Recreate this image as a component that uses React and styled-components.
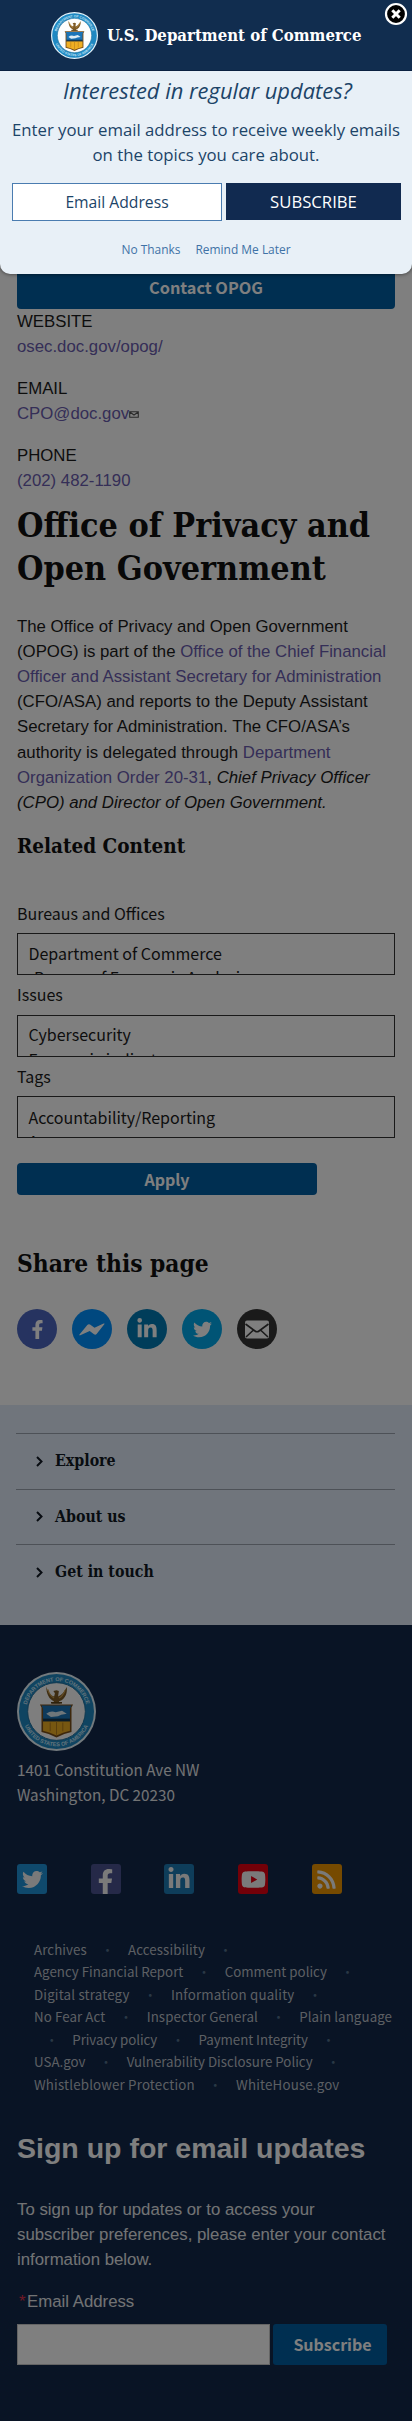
import React from 'react';
import styled, { createGlobalStyle } from 'styled-components';
import { FaFacebookF, FaLinkedinIn, FaTwitter, FaYoutube, FaRss } from 'react-icons/fa';

const sans = '"Liberation Sans", Arial, sans-serif';
const source = '"Noto Sans CJK SC", "Noto Sans", sans-serif';
const open = '"Open Sans", "Noto Sans", sans-serif';
const serif = '"DejaVu Serif Condensed", "DejaVu Serif", serif';

const GlobalStyle = createGlobalStyle`
  * { box-sizing: border-box; }
  body { margin: 0; background: #fff; }
  h1, h2, p, ul { margin: 0; padding: 0; }
  a { text-decoration: none; }
`;

const Page = styled.div`
  position: relative;
  width: 412px;
  height: 2421px;
  overflow: hidden;
  background: #fff;
  font: 16.8px/25.2px ${sans};
  color: #1b1b1b;
`;

const Main = styled.main`
  height: 1405px;
  padding: 265px 17px 0;
`;

const Button = styled.button`
  display: block;
  width: ${(p) => p.$width};
  height: ${(p) => p.$height}px;
  padding: 0;
  border: 0;
  border-radius: 4px;
  background: #005ea2;
  color: #fff;
  font: bold ${(p) => p.$size || 16}px/1 ${source};
`;

const Contacts = styled.div`
  display: flex;
  flex-direction: column;
  gap: 16.5px;
`;

const Contact = styled.div`
  line-height: 25.2px;
`;

const Link = styled.a`
  color: #6a5cae;
`;

const MailIcon = styled.svg`
  width: 10px;
  height: 7px;
  vertical-align: 1px;
`;

const Title = styled.h1`
  margin-top: 10.4px;
  font: bold 33.8px/43.5px ${serif};
  color: #111;
  white-space: nowrap;
`;

const Intro = styled.p`
  margin-top: 23px;
  white-space: nowrap;
`;

const Heading = styled.h2`
  margin-top: ${(p) => p.$top}px;
  font: bold ${(p) => p.$size}px/${(p) => p.$line}px ${serif};
  color: #111;
`;

const Filters = styled.div`
  display: flex;
  flex-direction: column;
  gap: 7px;
  margin: 40.5px 0 25px;
`;

const Field = styled.div`
  display: flex;
  flex-direction: column;
  gap: 7.5px;
  font: 16px/25px ${source};
`;

const ListBox = styled.div`
  height: 42px;
  padding: ${(p) => p.$pad || 6.5}px 10.5px 0;
  border: 1px solid #333;
  overflow: hidden;
  font: 16px/24.5px ${source};
`;

const ShareRow = styled.div`
  display: flex;
  gap: 15px;
  margin-top: 28px;
`;

const ShareIcon = styled.a`
  display: flex;
  align-items: center;
  justify-content: center;
  width: 40px;
  height: 40px;
  border-radius: 50%;
  background: ${(p) => p.$bg};
  color: #fff;
`;

const Explore = styled.nav`
  height: 220px;
  padding: 28px 17px 0 16px;
  background: #e0ebf9;
`;

const ExploreRow = styled.div`
  display: flex;
  align-items: center;
  gap: 12px;
  height: 55.6px;
  padding-left: 20px;
  border-top: 1px solid #9aa3ae;
  font: bold 15.8px/20px ${serif};
  color: #111823;
`;

const Footer = styled.footer`
  height: 796px;
  padding: 47px 17px 0;
  background: #12284a;
  color: #e4e6e9;
`;

const SealDrawing = styled.svg`
  display: block;
  flex: none;
`;

const Address = styled.div`
  margin-top: 6px;
  font: 15.25px/25px ${source};
`;

const Socials = styled.div`
  display: flex;
  gap: 43.7px;
  margin-top: 57px;
`;

const Social = styled.a`
  display: flex;
  align-items: ${(p) => p.$align || 'center'};
  justify-content: center;
  width: 30px;
  height: 30px;
  border-radius: 3px;
  background: ${(p) => p.$bg};
  color: #f4f4f4;
`;

const FooterLinks = styled.div`
  margin-top: 44.5px;
  padding-left: 17px;
  font: 13.32px/22.5px ${source};
  color: #b9bfc7;
`;

const FooterRow = styled.div`
  display: flex;
  height: 22.5px;
  white-space: nowrap;
  letter-spacing: ${(p) => p.$track || 0}px;
`;

const Separator = styled.span`
  width: 41.3px;
  margin-left: ${(p) => (p.$first ? -3 : 0)}px;
  text-align: center;
  font-size: 13px;
  color: #54708a;
`;

const SignupTitle = styled.h2`
  margin-top: 34px;
  font: bold 28.5px/36px ${sans};
  color: #fff;
`;

const SignupText = styled.p`
  margin: 31px 0 17px;
  line-height: 25px;
  white-space: nowrap;
`;

const SignupLabel = styled.div`
  padding-left: 2px;
  line-height: 25px;
`;

const Required = styled.span`
  display: inline-block;
  width: 8px;
  color: #e0304a;
`;

const SignupForm = styled.div`
  display: flex;
  gap: 3px;
  margin-top: 9.5px;
`;

const SignupInput = styled.input`
  width: 253px;
  height: 41px;
  border: 1px solid #c8c8c8;
  background: #fff;
`;

const SignupButton = styled(Button)`
  padding-left: 5px;
  border-radius: 3px;
`;

const Overlay = styled.div`
  position: absolute;
  inset: 0;
  background: rgba(0, 0, 0, 0.5);
`;

const Modal = styled.section`
  position: absolute;
  top: 0;
  left: 0;
  width: 412px;
  height: 274px;
  border-radius: 0 0 10px 10px;
  background: #e8f0f7;
  box-shadow: 0 0 4px rgba(0, 0, 0, 0.6);
  color: #1c4468;
  font-family: ${open};
  text-align: center;
`;

const ModalHeader = styled.header`
  display: flex;
  align-items: center;
  gap: 9px;
  height: 71px;
  padding-left: 51px;
  border-bottom: 1px solid #0a2040;
  background: #112d4f;
  color: #fff;
  font: bold 16.65px/24px ${serif};
  white-space: nowrap;
`;

const Close = styled.button`
  position: absolute;
  top: 2px;
  right: 4px;
  width: 24px;
  height: 24px;
  padding: 0;
  border: 0;
  background: none;
`;

const ModalTitle = styled.h2`
  margin-top: 4.5px;
  padding-left: 3px;
  font: italic 21.9px/30px ${open};
`;

const ModalText = styled.p`
  margin-top: 11.5px;
  font-size: 16.75px;
  line-height: 25px;
  white-space: nowrap;
`;

const ModalForm = styled.div`
  display: flex;
  gap: 4px;
  margin: 16px 11px 0 12px;
`;

const ModalInput = styled.div`
  width: 210px;
  height: 38px;
  border: 1px solid #4a7cb0;
  background: #fff;
  font-size: 15.7px;
  line-height: 37px;
`;

const ModalButton = styled.button`
  width: 175px;
  height: 37px;
  padding: 0;
  border: 0;
  background: #112a50;
  color: #fff;
  font: 16.7px/37px ${open};
`;

const ModalLinks = styled.div`
  display: flex;
  justify-content: center;
  gap: 15px;
  margin-top: 20px;
  font-size: 11.95px;
  line-height: 18px;
`;

const ModalLink = styled.a`
  color: #3f72a6;
`;

function Seal({ size, id }) {
  return (
    <SealDrawing width={size} height={size} viewBox="0 0 100 100">
      <defs>
        <path id={`${id}-top`} d="M11.5 50a38.5 38.5 0 0 1 77 0" />
        <path id={`${id}-bottom`} d="M6 50a44 44 0 0 0 88 0" />
      </defs>
      <circle cx="50" cy="50" r="50" fill="#e6f4fb" />
      <circle cx="50" cy="50" r="47.5" fill="#1f88c2" />
      <circle cx="50" cy="50" r="36.500" fill="#fdfdfd" stroke="#1d6e9c" strokeWidth="1.2" />
      <g fill="#c4e4f5" fontFamily="Liberation Sans, sans-serif" fontWeight="bold" fontSize="7" textAnchor="middle">
        <text><textPath href={`#${id}-top`} startOffset="50%">DEPARTMENT OF COMMERCE</textPath></text>
        <text><textPath href={`#${id}-bottom`} startOffset="50%">UNITED STATES OF AMERICA</textPath></text>
      </g>
      <path
        d="M37 18c2 8 5 11 10 13l1-4-2-3 4-1 3 1-1 7c5-2 8-6 11-12 1 8-2 14-7 17l-3 1 2 3h-11l3-3c-6-2-10-9-10-19z"
        fill="#7d5a26"
      />
      <path d="M39 22c2 7 4 9 8 11M61 23c-2 5-4 8-8 10" stroke="#c79a48" strokeWidth="1.5" fill="none" />
      <path d="M43 39h14" stroke="#5c4319" strokeWidth="2" />
      <path d="M29 41h42l-2 4v31q-10 2-19 7-9-5-19-7V45z" fill="#7a4f18" />
      <path d="M31 42.5h38l-2 4v14H33v-14z" fill="#1b74b8" />
      <path d="M37 53q6-5 12-2l8-2 6 4-7 1-4 2-9 1z" fill="#dcecf5" />
      <path d="M33 59h34v4H33z" fill="#143650" />
      <path d="M33 62.5h34v12q-9 2-17 6-8-4-17-6z" fill="#efae22" />
      <path d="M50 62.5v17M42 64v11M58 64v11" stroke="#b27b1c" strokeWidth="1.2" />
    </SealDrawing>
  );
}

const Chevron = () => (
  <svg width="7" height="11" viewBox="0 0 7 11">
    <path d="M1 1l4.5 4.5L1 10" fill="none" stroke="#111823" strokeWidth="2" />
  </svg>
);

const Messenger = () => (
  <svg width="26" height="13" viewBox="0 0 26 13">
    <path
      d="M.3 11.700L8.300 2q1.200-1.400 2.700-.5l4.500 3.200L24.600.6q1.400-.4.700.6L17.600 11q-1.200 1.400-2.600.3l-4.300-3.400-9.400 4.300q-1.500.5-1-.5z"
      fill="#fff"
    />
  </svg>
);

const Envelope = () => (
  <svg width="26" height="19" viewBox="0 0 26 19">
    <rect x="1" y="0.500" width="24" height="18" rx="2" fill="#fff" />
    <path
      d="M1.500 4l9.500 7q2 1.500 4 0l9.500-7M2 17l7.500-7M24 17l-7.500-7"
      fill="none"
      stroke="#353535"
      strokeWidth="1.600"
    />
  </svg>
);

const FILTERS = [
  { label: 'Bureaus and Offices', options: ['Department of Commerce', '-Bureau of Economic Analysis'] },
  { label: 'Issues', options: ['Cybersecurity', 'Economic indicators'] },
  { label: 'Tags', options: ['Accountability/Reporting', 'Aerospace'], pad: 7.5 },
];

const FOOTER_ROWS = [
  { items: ['Archives', '•', 'Accessibility', '•'], track: 0.08 },
  { items: ['Agency Financial Report', '•', 'Comment policy', '•'] },
  { items: ['Digital strategy', '•', 'Information quality', '•'], track: 0.18 },
  { items: ['No Fear Act', '•', 'Inspector General', '•', 'Plain language'], track: 0.09 },
  { items: ['•', 'Privacy policy', '•', 'Payment Integrity', '•'], track: -0.06 },
  { items: ['USA.gov', '•', 'Vulnerability Disclosure Policy', '•'] },
  { items: ['Whistleblower Protection', '•', 'WhiteHouse.gov'], track: 0.17 },
];

export default function App() {
  return (
    <Page>
      <GlobalStyle />
      <Main>
        <Button $width="378px" $height={44} $size={16.3}>Contact OPOG</Button>
        <Contacts>
          <Contact>WEBSITE<br /><Link>osec.doc.gov/opog/</Link></Contact>
          <Contact>
            EMAIL<br />
            <Link>CPO@doc.gov</Link>
            <MailIcon viewBox="0 0 10 7">
              <path d="M.7.7h8.600v5.600H.7zM.7 1l4.300 3 4.300-3" fill="none" stroke="#555" strokeWidth="1.100" />
            </MailIcon>
          </Contact>
          <Contact>PHONE<br /><Link>(202) 482-1190</Link></Contact>
        </Contacts>
        <Title>Office of Privacy and<br />Open Government</Title>
        <Intro>
          The Office of Privacy and Open Government<br />
          (OPOG) is part of the <Link>Office of the Chief Financial<br />
          Officer and Assistant Secretary for Administration</Link><br />
          (CFO/ASA) and reports to the Deputy Assistant<br />
          Secretary for Administration. The CFO/ASA’s<br />
          authority is delegated through <Link>Department<br />
          Organization Order 20-31</Link>, <em>Chief Privacy Officer<br />
          (CPO) and Director of Open Government.</em>
        </Intro>
        <Heading $top={17} $size={20.5} $line={28}>Related Content</Heading>
        <Filters>
          {FILTERS.map((f) => (
            <Field key={f.label}>
              {f.label}
              <ListBox $pad={f.pad}>
                {f.options.map((o) => <div key={o}>{o}</div>)}
              </ListBox>
            </Field>
          ))}
        </Filters>
        <Button $width="300px" $height={32}>Apply</Button>
        <Heading $top={52} $size={24.3} $line={34}>Share this page</Heading>
        <ShareRow>
          <ShareIcon $bg="#4c66c0"><FaFacebookF size={19} /></ShareIcon>
          <ShareIcon $bg="#0090ff"><Messenger /></ShareIcon>
          <ShareIcon $bg="#007bb5"><FaLinkedinIn size={22} /></ShareIcon>
          <ShareIcon $bg="#00a8ea"><FaTwitter size={19} /></ShareIcon>
          <ShareIcon $bg="#353535"><Envelope /></ShareIcon>
        </ShareRow>
      </Main>
      <Explore>
        {['Explore', 'About us', 'Get in touch'].map((t) => (
          <ExploreRow key={t}><Chevron />{t}</ExploreRow>
        ))}
      </Explore>
      <Footer>
        <Seal size={79} id="footer-seal" />
        <Address>1401 Constitution Ave NW<br />Washington, DC 20230</Address>
        <Socials>
          <Social $bg="#1f93d8"><FaTwitter size={21} /></Social>
          <Social $bg="#4a5290" $align="flex-end"><FaFacebookF size={25} /></Social>
          <Social $bg="#1c7ab4"><FaLinkedinIn size={24} /></Social>
          <Social $bg="#e60010"><FaYoutube size={25} /></Social>
          <Social $bg="#ec9400"><FaRss size={21} /></Social>
        </Socials>
        <FooterLinks>
          {FOOTER_ROWS.map((row) => (
            <FooterRow key={row.items.join('')} $track={row.track}>
              {row.items.map((t, i) => (t === '•'
                ? <Separator key={i} $first={i === 0}>{t}</Separator>
                : <span key={i}>{t}</span>))}
            </FooterRow>
          ))}
        </FooterLinks>
        <SignupTitle>Sign up for email updates</SignupTitle>
        <SignupText>
          To sign up for updates or to access your<br />
          subscriber preferences, please enter your contact<br />
          information below.
        </SignupText>
        <SignupLabel><Required>*</Required>Email Address</SignupLabel>
        <SignupForm>
          <SignupInput />
          <SignupButton $width="114px" $height={41}>Subscribe</SignupButton>
        </SignupForm>
      </Footer>
      <Overlay />
      <Modal>
        <ModalHeader>
          <Seal size={47} id="modal-seal" />
          U.S. Department of Commerce
        </ModalHeader>
        <ModalTitle>Interested in regular updates?</ModalTitle>
        <ModalText>
          Enter your email address to receive weekly emails<br />
          on the topics you care about.
        </ModalText>
        <ModalForm>
          <ModalInput>Email Address</ModalInput>
          <ModalButton>SUBSCRIBE</ModalButton>
        </ModalForm>
        <ModalLinks>
          <ModalLink>No Thanks</ModalLink>
          <ModalLink>Remind Me Later</ModalLink>
        </ModalLinks>
        <Close aria-label="Close">
          <svg width="24" height="24" viewBox="0 0 24 24">
            <circle cx="12" cy="12" r="10" fill="#000" stroke="#fff" strokeWidth="2.200" />
            <path d="M8.300 8.300l7.400 7.400M15.700 8.300l-7.400 7.400" stroke="#fff" strokeWidth="3" />
          </svg>
        </Close>
      </Modal>
    </Page>
  );
}
